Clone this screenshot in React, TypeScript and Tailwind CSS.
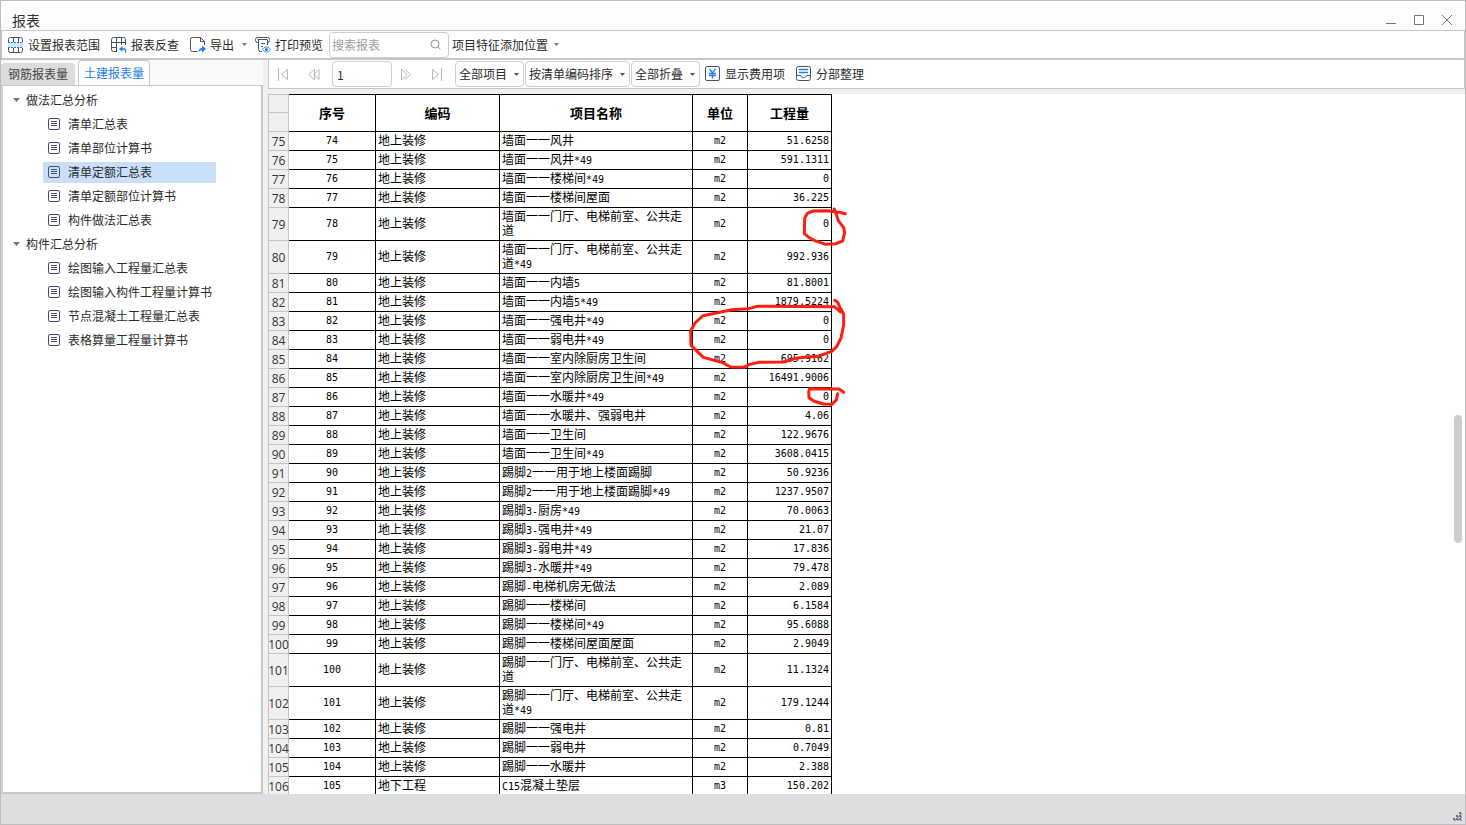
import type { ReactNode } from "react";

const BRUSH = "#ff1e0f";

type Row = [string, string, string, string];

const rows: Row[] = [
  ["地上装修", "墙面一一风井", "m2", "51.6258"],
  ["地上装修", "墙面一一风井*49", "m2", "591.1311"],
  ["地上装修", "墙面一一楼梯间*49", "m2", "0"],
  ["地上装修", "墙面一一楼梯间屋面", "m2", "36.225"],
  ["地上装修", "墙面一一门厅、电梯前室、公共走道", "m2", "0"],
  ["地上装修", "墙面一一门厅、电梯前室、公共走道*49", "m2", "992.936"],
  ["地上装修", "墙面一一内墙5", "m2", "81.8001"],
  ["地上装修", "墙面一一内墙5*49", "m2", "1879.5224"],
  ["地上装修", "墙面一一强电井*49", "m2", "0"],
  ["地上装修", "墙面一一弱电井*49", "m2", "0"],
  ["地上装修", "墙面一一室内除厨房卫生间", "m2", "695.9162"],
  ["地上装修", "墙面一一室内除厨房卫生间*49", "m2", "16491.9006"],
  ["地上装修", "墙面一一水暖井*49", "m2", "0"],
  ["地上装修", "墙面一一水暖井、强弱电井", "m2", "4.06"],
  ["地上装修", "墙面一一卫生间", "m2", "122.9676"],
  ["地上装修", "墙面一一卫生间*49", "m2", "3608.0415"],
  ["地上装修", "踢脚2一一用于地上楼面踢脚", "m2", "50.9236"],
  ["地上装修", "踢脚2一一用于地上楼面踢脚*49", "m2", "1237.9507"],
  ["地上装修", "踢脚3-厨房*49", "m2", "70.0063"],
  ["地上装修", "踢脚3-强电井*49", "m2", "21.07"],
  ["地上装修", "踢脚3-弱电井*49", "m2", "17.836"],
  ["地上装修", "踢脚3-水暖井*49", "m2", "79.478"],
  ["地上装修", "踢脚-电梯机房无做法", "m2", "2.089"],
  ["地上装修", "踢脚一一楼梯间", "m2", "6.1584"],
  ["地上装修", "踢脚一一楼梯间*49", "m2", "95.6088"],
  ["地上装修", "踢脚一一楼梯间屋面屋面", "m2", "2.9049"],
  ["地上装修", "踢脚一一门厅、电梯前室、公共走道", "m2", "11.1324"],
  ["地上装修", "踢脚一一门厅、电梯前室、公共走道*49", "m2", "179.1244"],
  ["地上装修", "踢脚一一强电井", "m2", "0.81"],
  ["地上装修", "踢脚一一弱电井", "m2", "0.7049"],
  ["地上装修", "踢脚一一水暖井", "m2", "2.388"],
  ["地下工程", "C15混凝土垫层", "m3", "150.202"],
];

const tree = [
  {
    title: "做法汇总分析",
    items: ["清单汇总表", "清单部位计算书", "清单定额汇总表", "清单定额部位计算书", "构件做法汇总表"],
  },
  {
    title: "构件汇总分析",
    items: ["绘图输入工程量汇总表", "绘图输入构件工程量计算书", "节点混凝土工程量汇总表", "表格算量工程量计算书"],
  },
];

const Caret = ({ className = "" }: { className?: string }) => (
  <svg width="5" height="3" viewBox="0 0 5 3" className={`shrink-0 ${className}`} aria-hidden="true">
    <path d="M0 0h5L2.5 3z" fill="currentColor" />
  </svg>
);

const Icon = ({ children, size = 16 }: { children: ReactNode; size?: number }) => (
  <svg
    width={size}
    height={size}
    viewBox={`0 0 ${size} ${size}`}
    fill="none"
    stroke="#46506a"
    className="shrink-0"
    aria-hidden="true"
  >
    {children}
  </svg>
);

const RangeIcon = () => (
  <Icon>
    <path d="M.5 5V2.500a2 2 0 0 1 2-2h10a2 2 0 0 1 2 2V5M.5 11v2.500a2 2 0 0 0 2 2h10a2 2 0 0 0 2-2V11M5.500.5V5M10.500.5V5M5.500 11v4.500M10.500 11v4.500" />
    <path d="M0 5h15v6H0z" fill="#d3e8ff" stroke="none" />
    <path d="M0 5.500h15M0 10.500h15" stroke="#1e7fee" strokeDasharray="2 1" />
  </Icon>
);

const CheckBackIcon = () => (
  <Icon>
    <path d="M14.500 8V2.500a2 2 0 0 0-2-2h-10a2 2 0 0 0-2 2v10a2 2 0 0 0 2 2H6M5.500.5v14M10.500.5V8M.5 5.500h14M.5 10.500H6" />
    <path d="M14.500 15.500V13a1 1 0 0 0-1-1H9" stroke="#1e7fee" strokeWidth="1.3" />
    <path d="M11.500 9v6L8 12z" fill="#1e7fee" stroke="none" />
  </Icon>
);

const ExportIcon = () => (
  <Icon>
    <path d="M7.500 14.500h-5a2 2 0 0 1-2-2v-10a2 2 0 0 1 2-2h8l4 4V8M10.500.5v4h4" />
    <path d="M8.500 15.500c.2-3 1.500-4.500 3.500-4.700V8.500l4 3.500-4 3.500v-2.200c-1.500 0-2.500.7-3.500 2.200z" fill="#1e7fee" stroke="none" />
  </Icon>
);

const PreviewIcon = () => (
  <Icon>
    <path d="M3.500 5.500h-1a2 2 0 0 1-2-2V2.500a2 2 0 0 1 2-2h10a2 2 0 0 1 2 2v1a2 2 0 0 1-2 2M2.500 2.500h10M3.500 3v9.500a2 2 0 0 0 2 2H7M12.500 3v5M6 6.500h4M6 9.500h2" />
    <path d="M7.500 12.500c2-3.300 6-3.300 8 0-2 3.300-6 3.300-8 0z" stroke="#1e7fee" fill="#fff" />
    <circle cx="11.500" cy="12.500" r="1.500" fill="#1e7fee" stroke="none" />
  </Icon>
);

const YuanIcon = () => (
  <Icon>
    <rect x=".5" y=".5" width="14" height="14" rx="1.500" />
    <path d="m4.500 3 3 4 3-4M7.500 7v5.500M4 7.500h7M4 9.500h7" stroke="#1e7fee" strokeWidth="1.3" />
  </Icon>
);

const SortIcon = () => (
  <Icon>
    <rect x=".5" y=".5" width="14" height="14" rx="2" />
    <path d="M.5 9.500h4c.5 1.500 1.500 2 3 2s2.500-.5 3-2h4" />
    <path d="M3 3.500h9M3 6.500h9" stroke="#1e7fee" strokeWidth="1.300" />
  </Icon>
);

const SheetIcon = () => (
  <Icon size={12}>
    <rect x=".5" y=".5" width="11" height="11" rx="1.500" />
    <path d="M3 3.500h6M3 5.500h6M3 7.500h6" />
  </Icon>
);

const NavButton = ({ label, d }: { label: string; d: string }) => (
  <button type="button" aria-label={label} className="flex h-6 w-5 items-center justify-center">
    <svg width="12" height="13" viewBox="0 0 12 13" fill="none" stroke="#b4b8bd" aria-hidden="true">
      <path d={d} />
    </svg>
  </button>
);

const ToolButton = ({ icon, children }: { icon: ReactNode; children: ReactNode }) => (
  <button type="button" className="flex shrink-0 items-center gap-1 whitespace-nowrap">
    {icon}
    <span>{children}</span>
  </button>
);

const DropButton = ({ children }: { children: ReactNode }) => (
  <button
    type="button"
    className="flex h-[26px] shrink-0 items-center gap-[7px] whitespace-nowrap rounded border border-[#cfcfcf] pr-1 pl-[3px]"
  >
    {children}
    <Caret className="text-[#555]" />
  </button>
);

// half-width characters are set in the mono face, at half the width of a hanzi
const CellText = ({ text }: { text: string }) => (
  <>
    {text.split(/([\x21-\x7e]+)/).map((part, i) =>
      i % 2 ? (
        <span key={i} className="font-['DejaVu_Sans_Mono',monospace] text-[10px] leading-none">
          {part}
        </span>
      ) : (
        part
      ),
    )}
  </>
);

const TitleBar = () => (
  <header className="flex h-[29px] shrink-0 items-center justify-between bg-[#fdfdfd] pt-2 pr-3 pl-[11px]">
    <h1 className="text-sm text-[#333]">报表</h1>
    <div className="flex items-center gap-4 text-[#777]">
      <button type="button" aria-label="最小化">
        <svg width="12" height="12" viewBox="0 0 12 12" stroke="currentColor" fill="none"><path d="M1 9.500h10" /></svg>
      </button>
      <button type="button" aria-label="最大化">
        <svg width="12" height="12" viewBox="0 0 12 12" stroke="currentColor" fill="none"><path d="M1.500 1.500h9v9h-9z" /></svg>
      </button>
      <button type="button" aria-label="关闭">
        <svg width="12" height="12" viewBox="0 0 12 12" stroke="currentColor" fill="none"><path d="m1 1 10 10M11 1 1 11" /></svg>
      </button>
    </div>
  </header>
);

const MainToolbar = () => (
  <div className="flex h-[29px] shrink-0 items-center border border-[#c4c7cc] bg-white pl-1.5">
    <ToolButton icon={<RangeIcon />}>设置报表范围</ToolButton>
    <div className="w-[11px]" />
    <ToolButton icon={<CheckBackIcon />}>报表反查</ToolButton>
    <div className="w-[11px]" />
    <ToolButton icon={<ExportIcon />}>导出</ToolButton>
    <Caret className="mx-2 text-[#777]" />
    <ToolButton icon={<PreviewIcon />}>打印预览</ToolButton>
    <label className="ml-1.5 flex h-[26px] w-[120px] shrink-0 items-center rounded border border-[#cfcfcf] pr-[7px] pl-0.5">
      <input
        type="text"
        aria-label="搜索报表"
        placeholder="搜索报表"
        className="w-full min-w-0 outline-none placeholder:text-[#a0a0a0]"
      />
      <svg width="11" height="11" viewBox="0 0 11 11" fill="none" stroke="#999" className="shrink-0" aria-hidden="true">
        <circle cx="5" cy="5" r="4" />
        <path d="m8 8 2.500 2.500" />
      </svg>
    </label>
    <button type="button" className="ml-[3px] flex shrink-0 items-center gap-1.5 whitespace-nowrap">
      项目特征添加位置
      <Caret className="text-[#777]" />
    </button>
  </div>
);

const Sidebar = () => (
  <aside className="flex w-[262px] shrink-0 flex-col bg-[#fafafa]">
    <div role="tablist" className="flex h-[25px] shrink-0 items-end">
      <button type="button" role="tab" aria-selected="false" className="h-[22px] w-[74px] rounded-t bg-[#dcdcdd] text-[#444]">
        钢筋报表量
      </button>
      <button
        type="button"
        role="tab"
        aria-selected="true"
        className="ml-[3px] h-[25px] w-[72px] rounded-t border border-b-0 border-[#c4c7cc] bg-white text-[#1e7fee]"
      >
        土建报表量
      </button>
    </div>
    <nav className="min-h-0 flex-1 overflow-hidden border-2 border-t border-[#c6c8cf] border-l-[#d0d2d8] bg-white pt-0.5">
      {tree.map((group) => (
        <section key={group.title}>
          <h2 className="flex h-6 items-center gap-1.5 pl-2.5">
            <svg width="7" height="4" viewBox="0 0 7 4" aria-hidden="true"><path d="M0 0h7L3.500 4z" fill="#777" /></svg>
            {group.title}
          </h2>
          <ul>
            {group.items.map((item) => (
              <li key={item} className="flex h-6 items-center pl-10">
                <a
                  href="#"
                  className={`flex h-[21px] items-center gap-2 pl-[5px] ${item === "清单定额汇总表" ? "w-[173px] bg-[#c8dffa]" : ""}`}
                >
                  <SheetIcon />
                  {item}
                </a>
              </li>
            ))}
          </ul>
        </section>
      ))}
    </nav>
  </aside>
);

const SheetToolbar = () => (
  <div className="flex h-[29px] shrink-0 items-center border border-t-0 border-[#c4c7cc] bg-white pl-1">
    <NavButton label="首页" d="M1.500 0v13M10.500 1.500v10l-6-5z" />
    <div className="w-[11px]" />
    <NavButton label="上一页" d="M6.500 1v11L1 6.500zM11 1.500 6 6.500l5 5z" />
    <input
      type="text"
      aria-label="页码"
      defaultValue="1"
      className="mr-1 ml-2 h-[26px] w-[60px] shrink-0 rounded border border-[#cfcfcf] px-1 outline-none"
    />
    <NavButton label="下一页" d="M1.500 1v11L7 6.500zM5 1.500l5.500 5-5.500 5" />
    <div className="w-[11px]" />
    <NavButton label="末页" d="M10.500 0v13M1.500 1.500v10l6-5z" />
    <div className="ml-2 flex gap-px">
      <DropButton>全部项目</DropButton>
      <DropButton>按清单编码排序</DropButton>
      <DropButton>全部折叠</DropButton>
    </div>
    <div className="ml-[5px] flex gap-[11px]">
      <ToolButton icon={<YuanIcon />}>显示费用项</ToolButton>
      <ToolButton icon={<SortIcon />}>分部整理</ToolButton>
    </div>
  </div>
);

const rowHead =
  "border-x border-b border-[#c4c4c4] bg-[#f0f0f0] p-0 text-center font-['Open_Sans',sans-serif] font-normal text-[#333]";
const cell = "border-r border-b border-black p-0";
const numCell = `${cell} font-['DejaVu_Sans_Mono',monospace] text-[10px] leading-4`;
const headCell = "border-t border-r border-b border-black p-0 text-[13px] font-bold";

const Sheet = () => (
  <div className="relative min-h-0 flex-1 overflow-hidden bg-white">
    <table className="w-[564px] table-fixed border-separate border-spacing-0 text-black">
      <colgroup>
        <col className="w-[21px]" />
        <col className="w-[87px]" />
        <col className="w-[124px]" />
        <col className="w-[193px]" />
        <col className="w-[55px]" />
        <col className="w-[84px]" />
      </colgroup>
      <thead>
        <tr className="h-[19px]">
          <td className={`${rowHead} border-t`} />
          <th rowSpan={2} className={headCell}>序号</th>
          <th rowSpan={2} className={headCell}>编码</th>
          <th rowSpan={2} className={headCell}>项目名称</th>
          <th rowSpan={2} className={headCell}>单位</th>
          <th rowSpan={2} className={headCell}>工程量</th>
        </tr>
        <tr className="h-[19px]">
          <td className={rowHead} />
        </tr>
      </thead>
      <tbody>
        {rows.map(([code, name, unit, amount], i) => (
          <tr key={i} className={name.includes("公共") ? "h-[33px]" : "h-[19px]"}>
            <th scope="row" className={`${rowHead} pt-0.5 leading-4`}>
              <span className="-mx-1">{i + 75}</span>
            </th>
            <td className={`${numCell} text-center`}>{i + 74}</td>
            <td className={`${cell} pb-0.5 pl-0.5 leading-[14px]`}>{code}</td>
            <td className={`${cell} pb-0.5 pl-0.5 leading-[14px]`}>
              <div className="w-[184px]">
                <CellText text={name} />
              </div>
            </td>
            <td className={`${numCell} text-center`}>{unit}</td>
            <td className={`${numCell} pr-0.5 text-right`}>{amount}</td>
          </tr>
        ))}
      </tbody>
    </table>

    {/* hand-drawn marks over the suspicious amounts */}
    <svg
      width="180"
      height="230"
      viewBox="0 0 540 690"
      fill="none"
      stroke={BRUSH}
      strokeWidth="9"
      strokeLinecap="round"
      strokeLinejoin="round"
      className="pointer-events-none absolute top-24 left-[412px]"
      aria-hidden="true"
    >
      <path d="M496 71 478 67 440 62 399 63 382 70 374 85 373 131 384 140 404 152 437 163 468 161 488 153 494 128 491 113 475 92 468 70 463 57" />
      <path d="M464 331 473 337 480 353 484 366M482 366 463 350 231 349 205 356 156 359 69 377 45 399 32 423 33 466 70 502 126 517 152 531 192 532 207 524 235 517 311 516 350 504 415 499 455 484 470 470 483 444 491 405 491 373 484 358" />
      <path d="M491 607 477 597 388 596M386 604 387 623 401 633 430 642 456 643 469 630 473 611" />
    </svg>

    <div className="absolute top-[321px] right-[3px] h-32 w-2 rounded-full bg-[#cdcdcd]" />
  </div>
);

const App = () => (
  <div className="flex h-screen flex-col overflow-hidden border border-[#bdbdbf] bg-[#f0f0f0] font-['Noto_Sans_CJK_SC',sans-serif] text-xs text-[#2b2b2b]">
    <TitleBar />
    <MainToolbar />
    <div className="flex min-h-0 flex-1 border-t border-[#c4c7cc]">
      <Sidebar />
      <main className="ml-[5px] flex min-w-0 flex-1 flex-col">
        <SheetToolbar />
        <div className="h-[5px] shrink-0" />
        <Sheet />
      </main>
    </div>
    <footer className="flex h-[30px] shrink-0 items-end justify-end bg-[#dedee0] p-[3px]">
      <svg width="9" height="9" viewBox="0 0 9 9" fill="#6b7482" aria-hidden="true">
        <path d="M6 0h2v2H6zM3 3h2v2H3zM6 3h2v2H6zM0 6h2v2H0zM3 6h2v2H3zM6 6h2v2H6z" />
        <path d="M7 1h2v2H7zM4 4h2v2H4zM7 4h2v2H7zM1 7h2v2H1zM4 7h2v2H4zM7 7h2v2H7z" opacity=".6" />
      </svg>
    </footer>
  </div>
);

export default App;
